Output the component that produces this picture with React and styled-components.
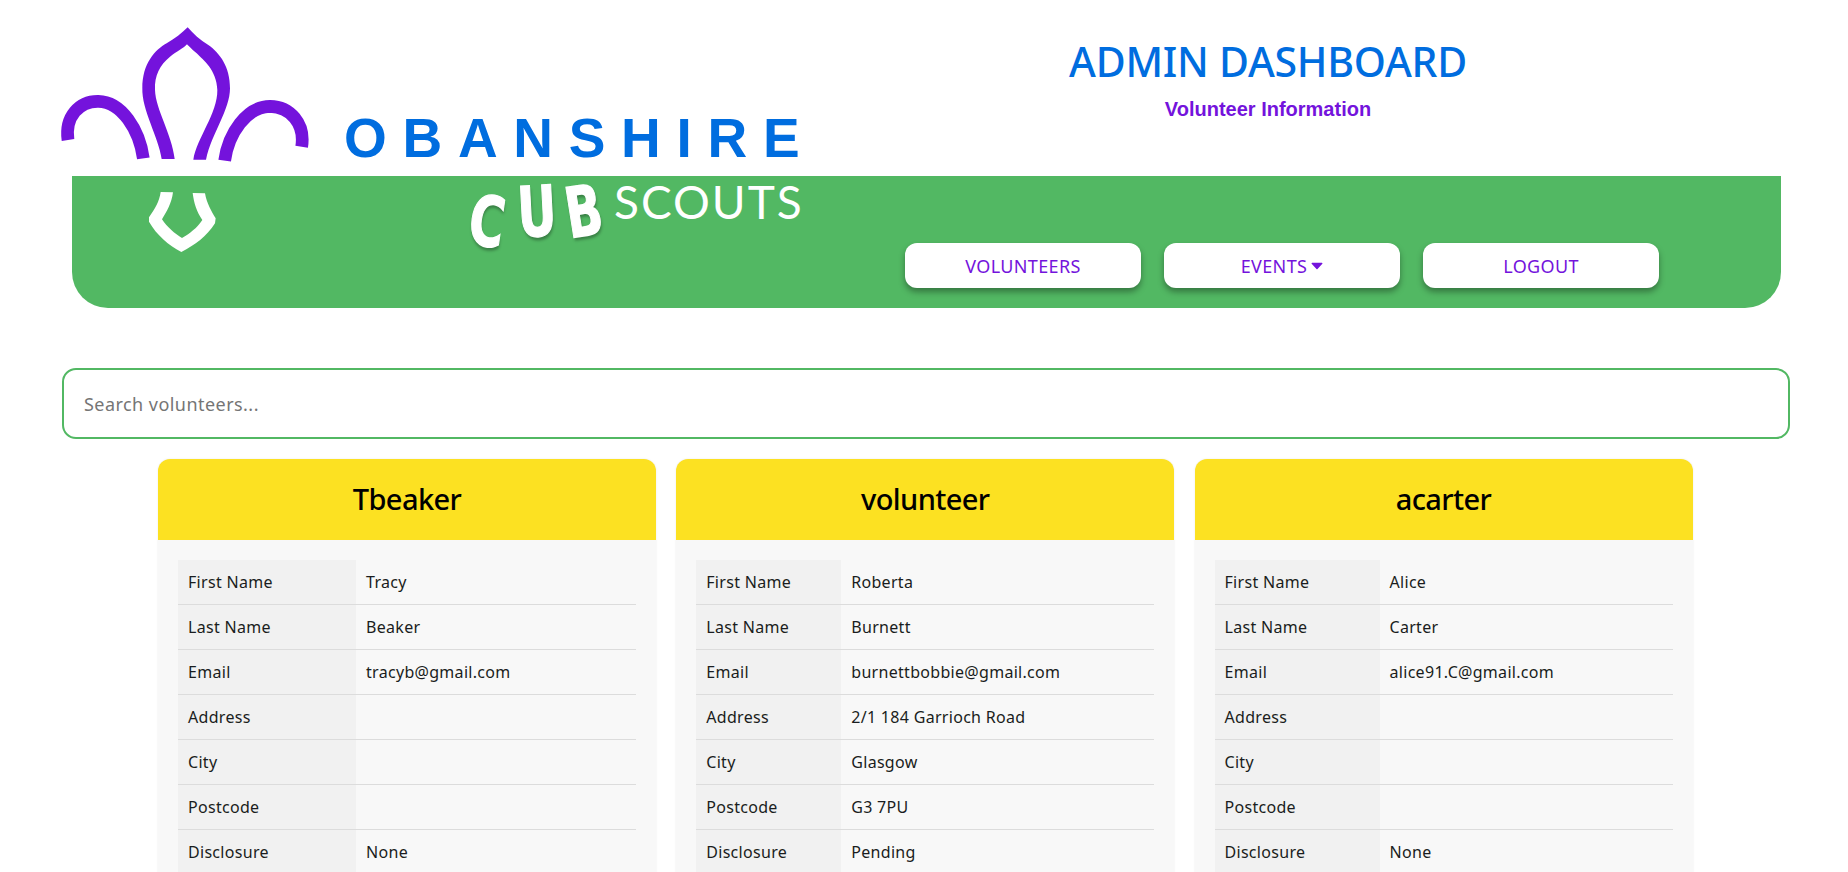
import React from "react";
import styled, { createGlobalStyle } from "styled-components";

const Global = createGlobalStyle`
  html, body { margin: 0; padding: 0; background: #fff; }
  html, body, #root { height: 100%; overflow: hidden; }
  body { font-family: "Noto Sans", "Open Sans", sans-serif; color: #212529; }
`;

const Page = styled.div`
  position: relative;
  width: 1848px;
  height: 872px;
  overflow: hidden;
`;

const Header = styled.header`
  height: 176px;
  display: flex;
  justify-content: flex-end;
  padding-right: 180px;
  box-sizing: border-box;
`;

const TitleBlock = styled.div`
  width: 800px;
  text-align: center;
  padding-top: 35px;
`;

const Title = styled.h1`
  margin: 0;
  font-size: 41px;
  line-height: 52px;
  font-weight: 500;
  color: #006ddf;
  letter-spacing: -0.25px;
`;

const Subtitle = styled.h2`
  margin: 10px 0 0;
  font-family: "Liberation Sans", Arial, sans-serif;
  font-size: 20px;
  line-height: 24px;
  font-weight: 700;
  color: #7413dc;
`;

const Logo = styled.div`
  position: absolute;
  top: 0;
  left: 0;
  width: 820px;
  height: 260px;
  pointer-events: none;
  z-index: 2;
`;

const LogoMark = styled.svg`
  position: absolute;
  left: 40px;
  top: 10px;
  width: 400px;
  height: 310px;
`;

const Oban = styled.div`
  position: absolute;
  left: 344px;
  top: 106px;
  font-family: "Liberation Sans", Arial, sans-serif;
  font-weight: 700;
  font-size: 55px;
  line-height: 64px;
  letter-spacing: 15.7px;
  color: #006ddf;
  white-space: nowrap;
`;

const Scouts = styled.div`
  position: absolute;
  left: 614px;
  top: 174px;
  font-family: "Lato", sans-serif;
  font-weight: 400;
  font-size: 46px;
  line-height: 56px;
  letter-spacing: 2px;
  color: #fff;
  white-space: nowrap;
`;

const Cub = styled.div`
  position: absolute;
  left: 466px;
  top: 184px;
  display: flex;
  gap: 14px;
  font-family: "DejaVu Sans", sans-serif;
  font-weight: 700;
  line-height: 50px;
  color: #fff;
  -webkit-text-stroke: 1.2px #fff;
  text-shadow: 1px 3px 3px rgba(0, 0, 0, 0.3);
`;

const CubLetter = styled.span`
  display: block;
  width: 34px;
  font-size: 60px;
  text-align: center;
  transform: translateY(${(p) => p.$y}px) rotate(${(p) => p.$r}deg) scaleX(0.8) scaleY(1.16);
`;

const NavBar = styled.nav`
  height: 132px;
  margin: 0 67px 0 72px;
  padding: 0 122px 20px 0;
  box-sizing: border-box;
  background: #52b863;
  border-radius: 0 0 36px 36px;
  display: flex;
  justify-content: flex-end;
  align-items: flex-end;
  gap: 23px;
`;

const NavButton = styled.button`
  width: 236px;
  height: 45px;
  border: 0;
  border-radius: 12px;
  background: #fff;
  color: #7413dc;
  font-family: inherit;
  font-size: 18px;
  letter-spacing: 0.35px;
  box-shadow: 0 4px 6px rgba(0, 0, 0, 0.35);
  display: flex;
  align-items: center;
  justify-content: center;
  gap: 4px;
`;

const Caret = styled.svg`
  width: 12px;
  height: 8px;
  margin-top: 1px;
`;

const SearchWrap = styled.div`
  padding: 60px 58px 0 62px;
`;

const SearchInput = styled.input`
  display: block;
  width: 100%;
  height: 71px;
  box-sizing: border-box;
  border: 2px solid #52b863;
  border-radius: 14px;
  padding: 0 20px;
  font-family: inherit;
  font-size: 18px;
  letter-spacing: 0.45px;
  color: #212529;
  outline: none;
  &::placeholder { color: #757575; opacity: 1; }
`;

const Cards = styled.section`
  display: grid;
  grid-template-columns: repeat(3, 498px);
  column-gap: 20.25px;
  margin: 20px 0 0 158px;
`;

const Card = styled.article`
  background: #f8f8f8;
  border-radius: 12px 12px 0 0;
  box-shadow: 0 0 2px rgba(0, 0, 0, 0.1);
`;

const CardHead = styled.h3`
  margin: 0;
  height: 81px;
  line-height: 79px;
  background: #fce122;
  border-radius: 12px 12px 0 0;
  text-align: center;
  font-size: 29px;
  font-weight: 500;
  color: #000;
  letter-spacing: -0.6px;
`;

const CardBody = styled.div`
  padding: 20px;
`;

const Table = styled.table`
  width: 100%;
  border-collapse: collapse;
  table-layout: fixed;
  font-size: 16px;
  letter-spacing: 0.3px;
  color: #1a1d20;
`;

const LabelCol = styled.col`
  width: ${(p) => p.$w}px;
`;

const Row = styled.tr`
  height: 45px;
  border-bottom: 1px solid #dcdcdc;
  &:first-child { height: 44px; }
`;

const Label = styled.th`
  background: #f1f1f1;
  text-align: left;
  font-weight: 400;
  padding: 0 10px;
  box-sizing: border-box;
  white-space: nowrap;
`;

const Value = styled.td`
  padding: 0 10px;
  white-space: nowrap;
`;

const volunteers = [
  { user: "Tbeaker", col: 178, first: "Tracy", last: "Beaker", email: "tracyb@gmail.com", address: "", city: "", postcode: "", disclosure: "None" },
  { user: "volunteer", col: 145, first: "Roberta", last: "Burnett", email: "burnettbobbie@gmail.com", address: "2/1 184 Garrioch Road", city: "Glasgow", postcode: "G3 7PU", disclosure: "Pending" },
  { user: "acarter", col: 165, first: "Alice", last: "Carter", email: "alice91.C@gmail.com", address: "", city: "", postcode: "", disclosure: "None" },
];

const fields = [
  ["First Name", "first"],
  ["Last Name", "last"],
  ["Email", "email"],
  ["Address", "address"],
  ["City", "city"],
  ["Postcode", "postcode"],
  ["Disclosure", "disclosure"],
];

export default function App() {
  return (
    <Page>
      <Global />
      <Logo>
        <LogoMark viewBox="0 0 1200 930">
          <g fill="none" stroke="#7413dc" strokeWidth="38">
            <path d="M84 390 C 74 320, 118 273, 175 274 C 245 275, 298 360, 310 445" />
            <path d="M554 452 C 565 370, 620 290, 690 289 C 750 290, 796 340, 785 410" />
          </g>
          <path
            fill="#7413dc"
            d="M365 447 C 355 380, 305 300, 307 235 C 307 160, 345 120, 380 100 C 405 85, 425 70, 443 52 C 460 72, 480 90, 505 105 C 540 130, 570 170, 570 235 C 570 300, 515 370, 498 449 L 460 449 C 470 385, 533 310, 532 240 C 530 180, 490 150, 470 130 C 455 118, 448 110, 441 103 C 430 115, 410 125, 390 140 C 360 165, 343 195, 345 240 C 347 300, 395 370, 404 447 Z"
          />
          <path
            fill="#fff"
            d="M362 546 L399 547 C 395 580, 380 605, 366 628 C 380 650, 405 672, 426 684 C 450 670, 470 655, 487 630 C 470 605, 462 580, 458 549 L495 550 C 500 580, 515 605, 527 625 L525 640 C 500 680, 465 705, 424 726 C 385 705, 350 675, 327 635 L 327 622 C 345 595, 358 575, 362 546 Z"
          />
        </LogoMark>
        <Oban>OBANSHIRE</Oban>
        <Cub>
          <CubLetter $r={8} $y={12}>C</CubLetter>
          <CubLetter $r={-3} $y={3}>U</CubLetter>
          <CubLetter $r={-9} $y={3}>B</CubLetter>
        </Cub>
        <Scouts>SCOUTS</Scouts>
      </Logo>
      <Header>
        <TitleBlock>
          <Title>ADMIN DASHBOARD</Title>
          <Subtitle>Volunteer Information</Subtitle>
        </TitleBlock>
      </Header>
      <NavBar>
        <NavButton>VOLUNTEERS</NavButton>
        <NavButton>
          EVENTS
          <Caret viewBox="0 0 11 7">
            <path d="M1 0.5 H10 a0.6 0.6 0 0 1 0.4 1 L6 6.3 a0.7 0.7 0 0 1 -1 0 L0.6 1.5 a0.6 0.6 0 0 1 0.4 -1 Z" fill="#7413dc" />
          </Caret>
        </NavButton>
        <NavButton>LOGOUT</NavButton>
      </NavBar>
      <SearchWrap>
        <SearchInput placeholder="Search volunteers..." />
      </SearchWrap>
      <Cards>
        {volunteers.map((v) => (
          <Card key={v.user}>
            <CardHead>{v.user}</CardHead>
            <CardBody>
              <Table>
                <colgroup>
                  <LabelCol $w={v.col} />
                  <col />
                </colgroup>
                <tbody>
                  {fields.map(([label, key]) => (
                    <Row key={key}>
                      <Label>{label}</Label>
                      <Value>{v[key]}</Value>
                    </Row>
                  ))}
                </tbody>
              </Table>
            </CardBody>
          </Card>
        ))}
      </Cards>
    </Page>
  );
}
